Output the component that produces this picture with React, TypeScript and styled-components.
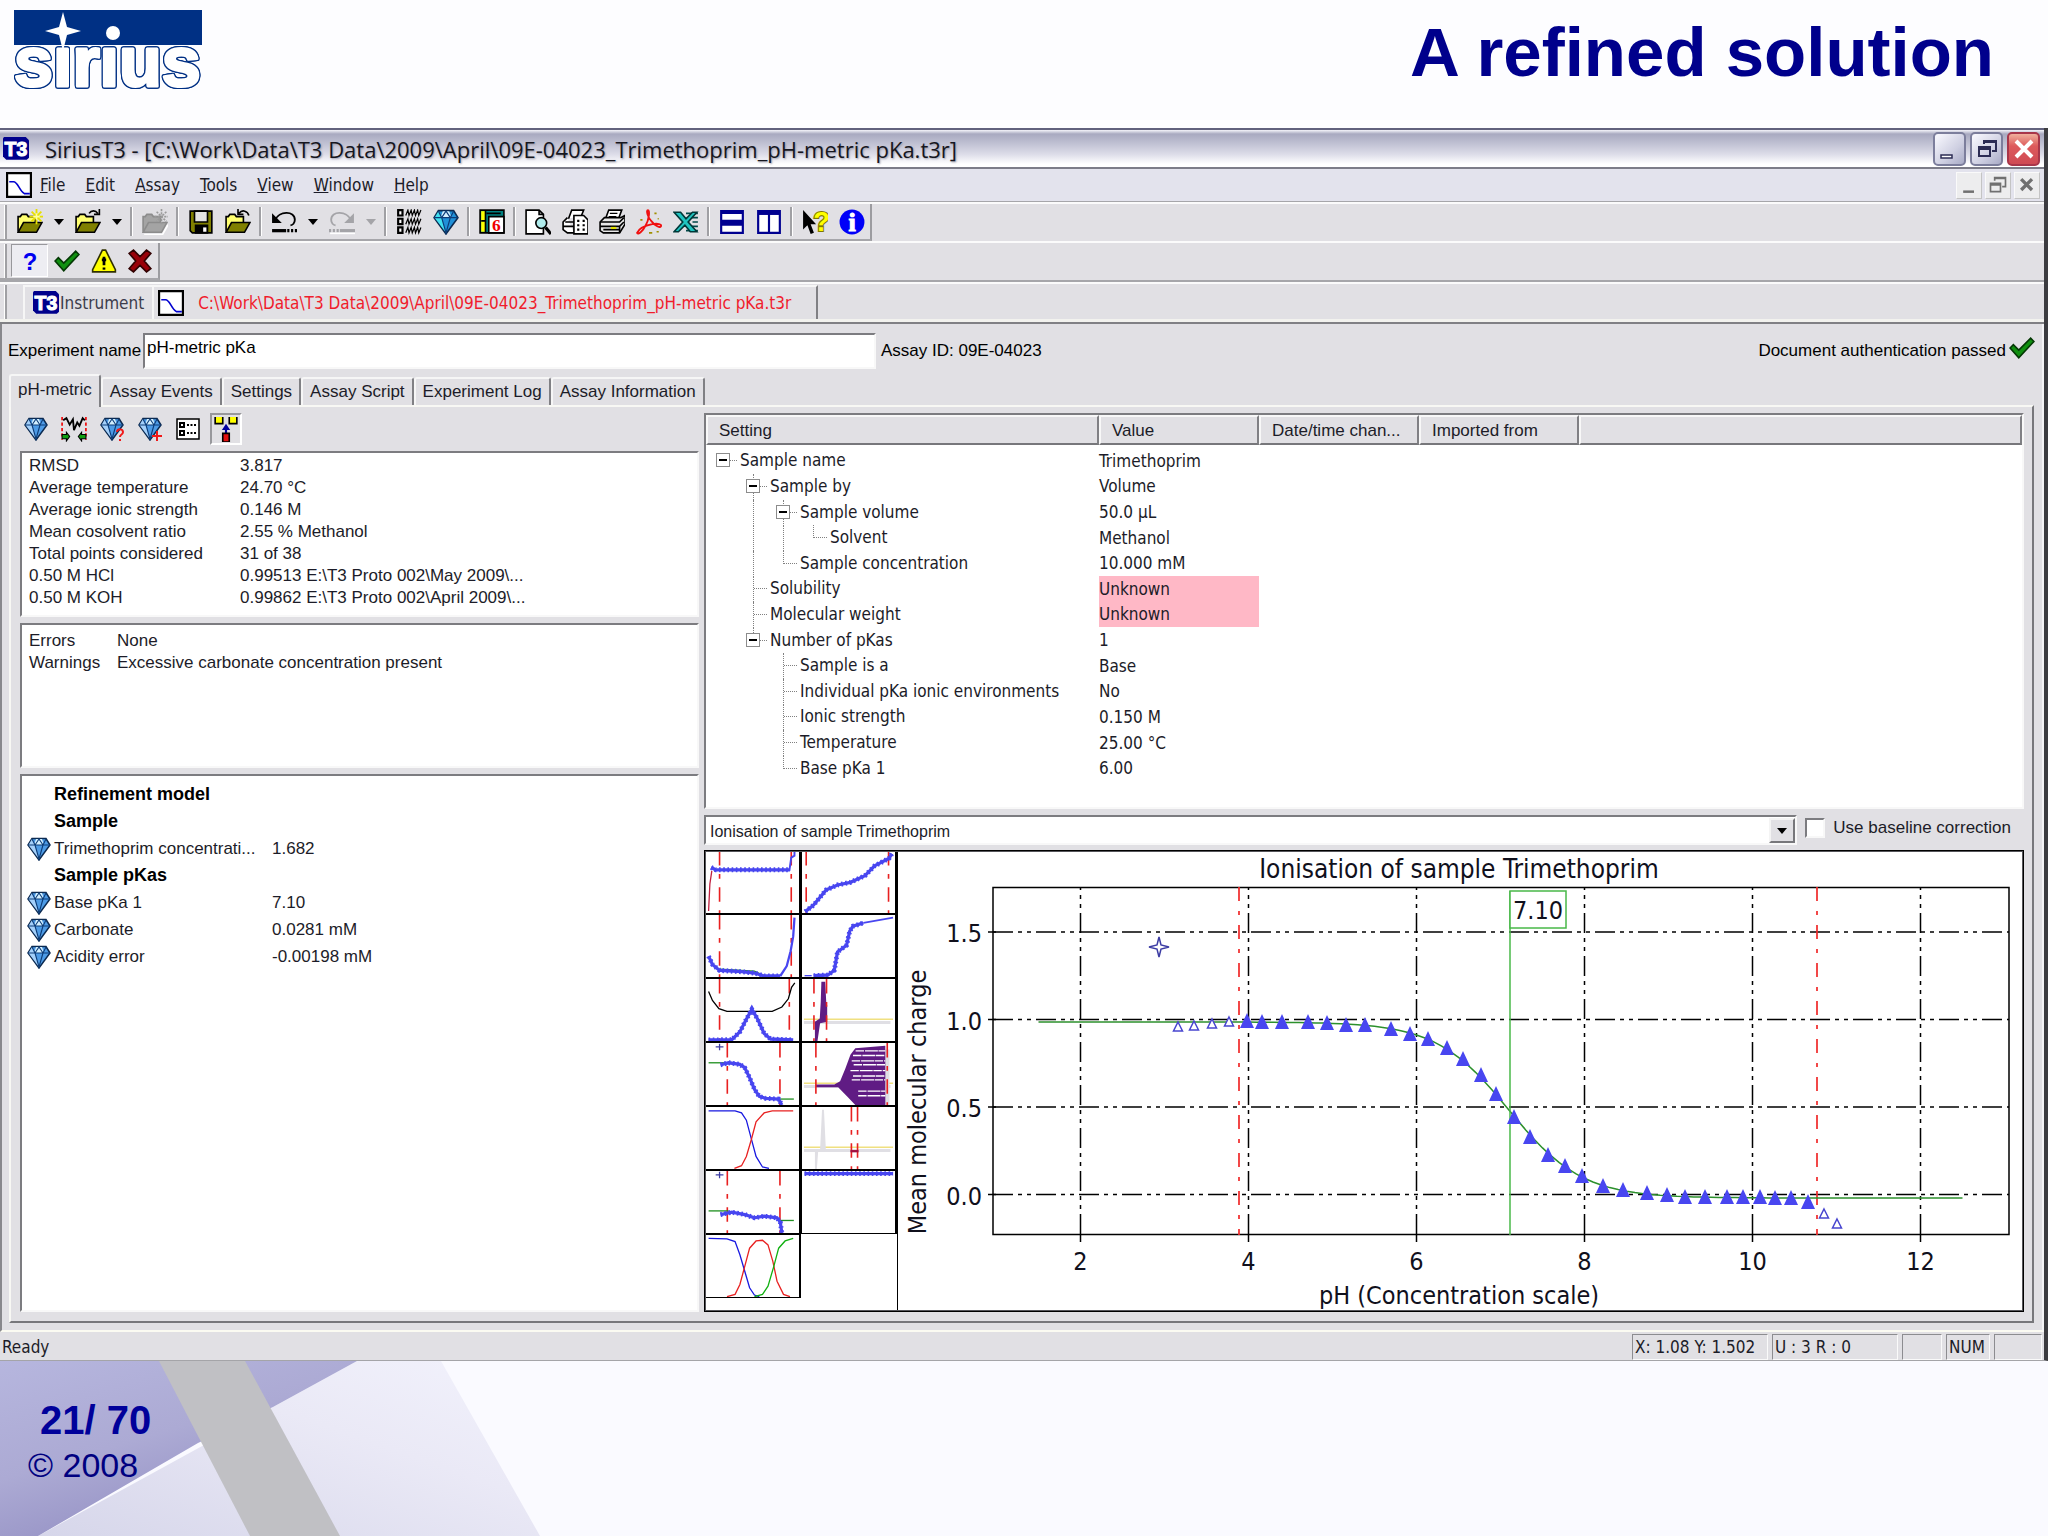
import React from "react";
import styled, { createGlobalStyle, css } from "styled-components";

const face = "#e1e0e4";
const navy = "#00008c";
const tahoma = `"DejaVu Sans Condensed", "DejaVu Sans", sans-serif`;
const sans = `"Liberation Sans", Arial, sans-serif`;

const GlobalStyle = createGlobalStyle`
  * { box-sizing: border-box; }
  body { margin: 0; background: #fdfdff; font-family: ${sans}; color: #1c1c28; }
  button, input, select { font: inherit; color: inherit; }
`;

/* ---------- Slide ---------- */

const Slide = styled.div`
  display: flex;
  flex-direction: column;
  min-height: 100vh;
`;

const SlideHeader = styled.header`
  display: flex;
  justify-content: space-between;
  align-items: flex-start;
  height: 128px;
  padding: 8px 54px 0 12px;
`;

const SlideTitle = styled.h1`
  margin: 6px 0 0;
  font-size: 69px;
  line-height: 78px;
  font-weight: bold;
  color: ${navy};
`;

const LogoText = styled.text`
  font-family: ${sans};
  font-size: 70px;
  font-weight: bold;
  fill: #fff;
  stroke: #fff;
  stroke-width: 3px;
  stroke-linejoin: round;
  filter: drop-shadow(1px 0 0 #003084) drop-shadow(-1px 0 0 #003084) drop-shadow(0 1px 0 #003084)
    drop-shadow(0 -1px 0 #003084);
`;

const SlideFooter = styled.footer`
  position: relative;
  flex: 1;
  min-height: 175px;
  padding: 36px 28px 0;
  background: #fafaff;
  overflow: hidden;
`;

const FooterArt = styled.svg`
  position: absolute;
  left: 0;
  top: 0;
  width: 600px;
  height: 175px;
`;

const PageNumber = styled.p`
  position: relative;
  margin: 0;
  padding-left: 12px;
  font-size: 40px;
  line-height: 46px;
  font-weight: bold;
  color: #00009a;
`;

const Copyright = styled.p`
  position: relative;
  margin: 0;
  font-size: 34px;
  line-height: 44px;
  color: #000080;
`;

/* ---------- Application window ---------- */

const AppWindow = styled.main`
  display: flex;
  flex-direction: column;
  background: ${face};
  border-right: 4px solid #3c3c40;
  border-bottom: 1px solid #a4a4a8;
`;

const TitleBar = styled.div`
  display: flex;
  align-items: center;
  height: 41px;
  padding: 0 4px 0 3px;
  border-top: 2px solid #62627e;
  border-bottom: 2px solid #7c7c88;
  background: linear-gradient(#f4f4fa 0, #a8a9c0 4px, #bcbdd0 12px, #dcdce8 24px, #ffffff 34px);
`;

const WindowTitle = styled.h2`
  flex: 1;
  margin: 0;
  padding-left: 16px;
  font-family: "Open Sans", "Noto Sans", sans-serif;
  font-size: 22px;
  line-height: 30px;
  font-weight: normal;
  color: #16161e;
  text-shadow: 1px 1px 2px #9a9aaa;
  white-space: nowrap;
`;

const WindowButtons = styled.div`
  display: flex;
  gap: 4px;
`;

const CaptionButton = styled.button<{ $danger?: boolean }>`
  width: 33px;
  height: 34px;
  padding: 0;
  border: 2px solid ${(p) => (p.$danger ? "#a8364a" : "#7c7e9c")};
  border-radius: 5px;
  background: ${(p) =>
    p.$danger
      ? "linear-gradient(#f0b09c, #dd5a5c 40%, #cf4a54)"
      : "linear-gradient(135deg, #fafaff, #cfd0e2 60%, #a9abc6)"};
  svg { display: block; margin: auto; }
`;

const MenuBar = styled.nav`
  display: flex;
  align-items: center;
  height: 33px;
  padding: 0 4px 0 6px;
  background: #e3e3ed;
  border-bottom: 1px solid #a6a6aa;
`;

const MenuItem = styled.button`
  padding: 0;
  margin-left: 8px;
  margin-right: 12px;
  border: 0;
  background: none;
  font-family: ${tahoma};
  font-size: 17px;
  line-height: 22px;
  &::first-letter { text-decoration: underline; }
`;

const ChildButtons = styled.div`
  display: flex;
  gap: 3px;
  margin-left: auto;
`;

const ChildButton = styled.button`
  width: 26px;
  height: 27px;
  padding: 0;
  border: 1px solid;
  border-color: #fafafa #c4c4c4 #c4c4c4 #fafafa;
  background: #ededee;
  svg { display: block; margin: auto; }
`;

const ToolRow = styled.div`
  display: flex;
  height: 39px;
  border-top: 2px solid #fbfbfb;
`;

const ToolBar = styled.div`
  display: flex;
  align-items: center;
  border-right: 2px solid #9c9ca0;
  border-bottom: 2px solid #a6a6aa;
`;

const Grip = styled.span`
  width: 3px;
  height: 34px;
  margin: 0 4px;
  border-right: 2px solid #a0a0a4;
  border-left: 1px solid #fff;
`;

const ToolButton = styled.button<{ $pressed?: boolean; $width?: number }>`
  display: grid;
  place-items: center;
  width: ${(p) => p.$width ?? 37}px;
  height: 33px;
  padding: 0;
  border: 1px solid transparent;
  background: none;
  ${(p) =>
    p.$pressed &&
    css`
      border-color: #98989c #fff #fff #98989c;
      background: #ededf2;
    `}
`;

const Separator = styled.span`
  width: 3px;
  height: 29px;
  margin: 0 3px;
  border-left: 2px solid #a0a0a4;
  border-right: 1px solid #fff;
`;

const DocumentBar = styled.div`
  display: flex;
  height: 44px;
  padding-top: 3px;
  border-top: 2px solid #a6a6aa;
  border-bottom: 2px solid #808084;
  box-shadow: inset 0 2px 0 #fbfbfb, inset 0 -3px 0 #f2f2ee;
`;

const DocumentTab = styled.button<{ $active?: boolean }>`
  display: flex;
  align-items: center;
  gap: ${(p) => (p.$active ? 14 : 1)}px;
  height: 34px;
  padding: 0 ${(p) => (p.$active ? 25 : 8)}px 0 ${(p) => (p.$active ? 4 : 8)}px;
  margin-left: ${(p) => (p.$active ? 0 : 12)}px;
  border: 0;
  border-top: 2px solid #f6f6f6;
  border-left: ${(p) => (p.$active ? 0 : 2)}px solid #f6f6f6;
  border-right: 2px solid ${(p) => (p.$active ? "#808084" : "#f6f6f6")};
  background: none;
  font-family: ${tahoma};
  font-size: 17px;
  line-height: 22px;
  color: ${(p) => (p.$active ? "#f01c2c" : "#3c3c4c")};
  white-space: nowrap;
`;

/* ---------- Experiment form ---------- */

const Workspace = styled.section`
  padding: 0 8px 7px 7px;
  border-left: 2px solid #88888c;
  border-bottom: 2px solid #fbfbf2;
  border-right: 2px solid #f4f4f6;
`;

const ExperimentRow = styled.div`
  display: flex;
  align-items: center;
  height: 50px;
  padding-top: 3px;
  font-size: 17px;
  line-height: 22px;
  color: #000;
`;

const NameLabel = styled.label`
  flex: none;
  width: 135px;
  margin-left: -1px;
  white-space: nowrap;
`;

const sunken = css`
  border: 2px solid;
  border-color: #7c7c80 #f8f8f8 #f8f8f8 #7c7c80;
  background: #fff;
`;

const NameInput = styled.input`
  ${sunken}
  width: 733px;
  height: 36px;
  padding: 0 2px 6px;
`;

const AssayId = styled.span`
  margin-left: 5px;
`;

const AuthStatus = styled.span`
  display: flex;
  align-items: center;
  gap: 3px;
  margin-left: auto;
  margin-right: -1px;
  svg { margin-bottom: 6px; }
`;

const PageTabs = styled.div`
  display: flex;
  align-items: flex-end;
  height: 31px;
`;

const PageTab = styled.button<{ $active?: boolean }>`
  height: ${(p) => (p.$active ? 33 : 28)}px;
  margin-bottom: ${(p) => (p.$active ? -2 : 0)}px;
  padding: 0 7px ${(p) => (p.$active ? 4 : 0)}px 7px;
  border: 2px solid;
  border-color: #f6f6f6 #808084 transparent #f6f6f6;
  border-bottom: 0;
  border-radius: 3px 3px 0 0;
  background: ${face};
  font-size: 17px;
  line-height: 22px;
  white-space: nowrap;
`;

const Page = styled.div`
  display: grid;
  grid-template-columns: 679px minmax(0, 1fr);
  gap: 5px;
  padding: 6px 8px 9px 9px;
  border: 2px solid;
  border-color: #f8f8f4 #77777b #77777b #f8f8f4;
`;

const Column = styled.div`
  display: flex;
  flex-direction: column;
  gap: 6px;
  min-width: 0;
`;

const PanelTools = styled.div`
  display: flex;
  align-items: center;
  gap: 6px;
  height: 32px;
`;

const PanelButton = styled.button<{ $pressed?: boolean }>`
  display: grid;
  place-items: center;
  width: 32px;
  height: 32px;
  padding: 0;
  border: 2px solid transparent;
  background: none;
  ${(p) =>
    p.$pressed &&
    css`
      border-color: #98989c #fff #fff #98989c;
    `}
`;

const Box = styled.section<{ $h?: number; $top?: number }>`
  ${sunken}
  ${(p) => (p.$h ? `height: ${p.$h}px;` : "flex: 1;")}
  padding: ${(p) => p.$top ?? 2}px 7px 0;
`;

const Pairs = styled.dl<{ $label: number }>`
  display: grid;
  grid-template-columns: ${(p) => p.$label}px 1fr;
  margin: 0;
  font-size: 17px;
  line-height: 22px;
  dt, dd { margin: 0; white-space: nowrap; }
`;

const ModelTable = styled.table`
  margin-top: 3px;
  margin-left: -2px;
  border-collapse: collapse;
  font-size: 17px;
  line-height: 22px;
  th, td { height: 27px; padding: 0; text-align: left; font-weight: normal; white-space: nowrap; }
  tr > :first-child { width: 27px; }
  tr > :nth-child(2) { width: 218px; }
  svg { display: block; }
`;

const ModelGroup = styled.strong`
  font-size: 18px;
  color: #000;
`;

/* ---------- Settings tree ---------- */

const TreeBox = styled.section`
  ${sunken}
  height: 396px;
`;

const TreeTable = styled.table`
  width: 100%;
  height: 366px;
  table-layout: fixed;
  border-collapse: collapse;
  font-family: ${tahoma};
  font-size: 17px;
  line-height: 22px;
  td, th { padding: 0; text-align: left; font-weight: normal; white-space: nowrap; }
`;

const HeadCell = styled.div`
  height: 30px;
  margin-bottom: 3px;
  padding: 3px 11px;
  overflow: hidden;
  border: 2px solid;
  border-color: #f8f8f8 #808084 #77777b #f8f8f8;
  background: ${face};
  font-family: ${sans};
`;

const TreeCell = styled.div`
  display: flex;
  align-items: stretch;
  height: 25px;
  padding-left: 4px;
  line-height: 24px;
`;

const Guide = styled.span<{ $line?: "full" | "half" | "none"; $arm?: boolean }>`
  position: relative;
  flex: none;
  width: 30px;
  &::before {
    content: "";
    position: absolute;
    left: 13px;
    top: 0;
    height: ${(p) => (p.$line === "full" ? "26px" : p.$line === "half" ? "13px" : "0")};
    border-left: 1px dotted #808080;
  }
  &::after {
    content: "";
    position: absolute;
    left: 14px;
    top: 12px;
    width: ${(p) => (p.$arm ? "13px" : "0")};
    border-top: 1px dotted #808080;
  }
`;

const Expander = styled.button`
  position: absolute;
  z-index: 1;
  left: 6px;
  top: 5px;
  width: 14px;
  height: 14px;
  padding: 0;
  border: 1px solid #8c8c8c;
  background: linear-gradient(#000, #000) center / 8px 2px no-repeat #fff;
`;

const ValueCell = styled.td<{ $missing?: boolean }>`
  ${(p) => p.$missing && "background: #ffb8c6;"}
`;

/* ---------- Graph ---------- */

const GraphBar = styled.div`
  display: flex;
  align-items: center;
  height: 30px;
  margin-bottom: -1px;
  font-size: 17px;
  line-height: 22px;
`;

const ComboBox = styled.div`
  ${sunken}
  position: relative;
  flex: 1;
  height: 30px;
`;

const Combo = styled.select`
  appearance: none;
  display: block;
  width: 100%;
  height: 26px;
  padding: 3px 30px 0 4px;
  border: 0;
  background: #fff;
  font-size: 16px;
`;

const ComboArrow = styled.span`
  position: absolute;
  right: 0;
  top: 1px;
  width: 26px;
  height: 25px;
  display: grid;
  place-items: center;
  border: 2px solid;
  border-color: #f4f4f4 #77777b #77777b #f4f4f4;
  background: ${face};
  pointer-events: none;
`;

const CheckLabel = styled.label`
  display: flex;
  align-items: center;
  gap: 8px;
  margin: 0 13px 5px 8px;
  white-space: nowrap;
`;

const CheckBox = styled.input`
  ${sunken}
  appearance: none;
  width: 20px;
  height: 20px;
  margin: 0;
`;

const GraphFrame = styled.section`
  display: grid;
  grid-template-columns: 193px minmax(0, 1fr);
  border: 1px solid #000;
  outline: 1px solid #55555a;
  outline-offset: -2px;
  background: #fff;
`;

const Thumbs = styled.div`
  display: grid;
  grid-template-columns: 96px 96px;
  grid-auto-rows: 64px;
  margin-top: -1px;
  border-right: 1px solid #000;
`;

const ThumbButton = styled.button`
  padding: 0;
  border: solid #000;
  border-width: 1px 2px 1px 1px;
  background: #fff;
  svg { display: block; width: 100%; height: 100%; }
`;

const ChartSvg = styled.svg`
  display: block;
  width: 100%;
  height: auto;
  font-family: ${tahoma};
  font-size: 25px;
`;

/* ---------- Status bar ---------- */

const StatusBar = styled.footer`
  display: flex;
  align-items: center;
  gap: 4px;
  height: 28px;
  padding: 1px 2px 0;
  font-family: ${tahoma};
  font-size: 17px;
  line-height: 24px;
`;

const StatusText = styled.span`
  flex: 1;
`;

const Pane = styled.span<{ $w: number }>`
  width: ${(p) => p.$w}px;
  height: 26px;
  padding-left: 2px;
  border: 1px solid;
  border-color: #8c8c90 #fafafa #fafafa #8c8c90;
  white-space: nowrap;
`;

/* ---------- Icons ---------- */

const Svg = ({ children, size = 26 }: { children: React.ReactNode; size?: number }) => (
  <svg width={size} height={size} viewBox="0 0 24 24" fill="none" stroke="#000" strokeWidth="1.5" aria-hidden="true">
    {children}
  </svg>
);

const Glyph = styled.text<{ $serif?: boolean }>`
  font-family: ${(p) => (p.$serif ? `"Liberation Serif", serif` : sans)};
  font-weight: bold;
  text-anchor: middle;
  paint-order: stroke;
`;

const Diamond = ({ size = 26, light, children }: { size?: number; light?: boolean; children?: React.ReactNode }) => (
  <Svg size={size}>
    <path d="M5 1.500h14l4 6.500-11 15L1 8z" fill={light ? "#4d9be6" : "#2090d8"} stroke="#0c2a50" />
    <path d="M5 2l3 6 4 14L1.500 8z" fill={light ? "#a4d0fa" : "#40e0f0"} stroke="none" />
    <path d="M9 2h6l2 6H7z" fill="#d4f0ff" stroke="none" />
    <path d="M1 8h22M8 8l4 14 4-14M5 2l3 6 4-6 4 6 3-6" stroke="#0c3c78" strokeWidth="1.100" />
    {children}
  </Svg>
);

const Folder = ({ gray }: { gray?: boolean }) => (
  <>
    <path d="M1 21V7h2l1.500-2H9l1.500 2H17v5" fill={gray ? "#a4a4a4" : "#ffff70"} stroke={gray ? "#8c8c8c" : "#000"} />
    <path d="M1 21.500l5-9h17l-5 9z" fill={gray ? "#a4a4a4" : "#808000"} stroke={gray ? "#8c8c8c" : "#000"} />
  </>
);

const icons: Record<string, React.ReactNode> = {
  new: (
    <Svg>
      <Folder />
      <path d="M18 0v14M11.500 7h13M13.500 2.500l9 9M22.500 2.500l-9 9" stroke="#e8e000" strokeWidth="1.700" />
      <path d="M18 4v6M15 7h6" stroke="#ffffa0" />
    </Svg>
  ),
  open: (
    <Svg>
      <Folder />
      <path d="M13 4c2-3 6-3 8 0M22.500 0v5h-5" />
    </Svg>
  ),
  newOff: (
    <Svg>
      <Folder gray />
      <path d="M18 0v14M11.500 7h13M13.500 2.500l9 9M22.500 2.500l-9 9" stroke="#9a9a9a" strokeDasharray="2 1" />
      <path d="M2 23.500h17l5-9" stroke="#fff" />
    </Svg>
  ),
  save: (
    <Svg>
      <path d="M2 2h20v20H4l-2-2z" fill="#808000" />
      <path d="M6 2h12v10H6z" fill="#e4e4e4" />
      <path d="M7 15h11v7H7z" fill="#000" />
      <path d="M14 17h3v4h-3z" fill="#fff" stroke="none" />
    </Svg>
  ),
  revert: (
    <Svg>
      <Folder />
      <path d="M22 6c-1-4-6-6-9-2M12 0v5h5" />
    </Svg>
  ),
  undo: (
    <Svg>
      <path d="M4 10c3-8 18-9 18 0 0 3-2 5-4 5" strokeWidth="1.700" />
      <path d="M1 4v9h9z" fill="#000" stroke="none" />
      <path d="M1 20h13" strokeWidth="3" />
      <path d="M15 20h9" strokeWidth="3" strokeDasharray="2 1.500" />
    </Svg>
  ),
  redo: (
    <Svg>
      <g stroke="#a4a4a8">
        <path d="M20 10C17 2 2 1 2 10c0 3 2 5 4 5" strokeWidth="1.700" />
        <path d="M23 4v9h-9z" fill="#a4a4a8" stroke="none" />
        <path d="M10 20h14" strokeWidth="3" />
        <path d="M0 20h10" strokeWidth="3" strokeDasharray="2 1.500" />
      </g>
      <path d="M1 22.500h23" stroke="#fff" />
    </Svg>
  ),
  list: (
    <Svg>
      {[1, 9, 17].map((y) => (
        <g key={y}>
          <path d={`M2 ${y}h4v5H2z`} fill="#fff" strokeWidth="2" />
          <path d={`M9 ${y + 5}l2-5 1 5 2-5 1 5 2-5 1 5 2-5 1 5 2-5`} strokeWidth="1.100" />
        </g>
      ))}
    </Svg>
  ),
  diamond: <Diamond />,
  calendar: (
    <Svg>
      <path d="M1 1h22v21H1z" fill="#008080" />
      <path d="M2 2h4v19H2z" fill="#ffff00" stroke="none" />
      <path d="M6 1v21M2 11h4M7 4h13" />
      <path d="M9 7h14v15H9z" fill="#fff" />
      <Glyph x="16" y="20" fontSize="16" fill="#f00000" stroke="none" $serif>6</Glyph>
    </Svg>
  ),
  preview: (
    <Svg>
      <path d="M1 1h12l4 4v18H1z" fill="#fff" />
      <path d="M13 1v4h4" />
      <circle cx="15" cy="13" r="5" fill="#b0ecec" />
      <path d="M19 17l5 6" strokeWidth="3" />
    </Svg>
  ),
  report: (
    <Svg>
      <path d="M6 9l3-8h11l-2 5M5 8l-4 4v7l4 3h6M3 12h8M1 16h10" fill="#fff" />
      <path d="M11 6h9l4 4v13H11z" fill="#fff" />
      <path d="M14 11h2M19 11h2M14 15h2M19 15h2M14 19h2M19 19h2" strokeWidth="2" />
    </Svg>
  ),
  print: (
    <Svg>
      <path d="M6 9L9 1h12l-3 8" fill="#fff" />
      <path d="M10 4h7M9 7h7" strokeWidth="1" />
      <path d="M1 12l4-4h15l4-2v8l-5 8H4l-3-2z" fill="#e8e8e8" />
      <path d="M1 12h18l4-4M1 16h18v6M19 16l4-4M4 19h15" />
      <path d="M11 17.500h5" stroke="#e0e000" strokeWidth="2" />
    </Svg>
  ),
  pdf: (
    <Svg>
      <path d="M1 22c2-5 9-7 14-8 5-1 9 0 8 2s-6-1-9-5C11 8 9 1 11 1s1 9-2 14c-3 6-7 9-8 7z" stroke="#f01010" strokeWidth="1.700" />
      <path d="M17 4h2M20 9h1M4 10h2M12 22h3M19 21h2" stroke="#a09000" />
    </Svg>
  ),
  excel: (
    <Svg>
      <path d="M12 4h11M12 20h11M17 8h6M18 12h5M17 16h6" stroke="#004848" />
      <path d="M1 3h6l5 6 6-6h4L14 12l8 9h-6l-5-6-6 6H1l8-9z" fill="#20c4c0" stroke="#003838" />
    </Svg>
  ),
  rows: (
    <Svg>
      <path d="M2 2h20v9H2zM2 13h20v9H2z" fill="#fff" stroke="#000090" strokeWidth="2" />
      <path d="M2 3h20M2 14h20" stroke="#000090" strokeWidth="3" />
    </Svg>
  ),
  cols: (
    <Svg>
      <path d="M2 2h20v20H2zM12 2v20" fill="#fff" stroke="#000090" strokeWidth="2" />
      <path d="M2 3.500h20" stroke="#000090" strokeWidth="4" />
    </Svg>
  ),
  help: (
    <Svg>
      <path d="M1 1v18l4-4 3 8 3-1-3-8h5z" fill="#000" stroke="none" />
      <Glyph x="18" y="20" fontSize="25" fill="#ffff00" stroke="#807800" strokeWidth="2">?</Glyph>
    </Svg>
  ),
  info: (
    <Svg>
      <circle cx="12" cy="12" r="11.500" fill="#0000f8" stroke="none" />
      <Glyph x="12" y="20" fontSize="24" fill="#fff" stroke="#fff" strokeWidth="1" $serif>i</Glyph>
    </Svg>
  ),
  question: (
    <Svg>
      <Glyph x="12" y="20" fontSize="22" fill="#0000f0" stroke="none">?</Glyph>
    </Svg>
  ),
  check: (
    <Svg>
      <path d="M1 12l3-3 5 5L20 3l3 3L9 21z" fill="#109010" stroke="#043804" />
    </Svg>
  ),
  warning: (
    <Svg>
      <path d="M10.500 2h3l9 18v2h-21v-2z" fill="#ffff00" stroke="#303000" />
      <path d="M12 8v8M10 11h4" strokeWidth="2.500" />
      <path d="M12 18v2" strokeWidth="2.500" />
    </Svg>
  ),
  cross: (
    <Svg>
      <path d="M2 5l4-3 6 6 6-6 4 3-6 7 6 7-4 3-6-6-6 6-4-3 6-7z" fill="#980008" stroke="#300000" />
    </Svg>
  ),
  graph: (
    <Svg>
      <path d="M1 1v21M23 1v21" stroke="#f00000" strokeDasharray="3 2" />
      <path d="M2 4l3-2 3 6 3-5 1 10 3-7 2 3 3-7 2 2" strokeWidth="1.700" />
      <path d="M1 17h4v-2l3 4-3 4v-2H1zM23 17h-4v-2l-3 4 3 4v-2h4z" fill="#10a010" strokeWidth="1" />
    </Svg>
  ),
  diamondAsk: (
    <Diamond light size={24}>
      <path d="M17 15c0-4 6-3 6 0s-3 2-3 5M20 22v2" stroke="#f01818" strokeWidth="2" />
    </Diamond>
  ),
  diamondPlus: (
    <Diamond light size={24}>
      <path d="M19 14v10M14 19h10" stroke="#f01818" strokeWidth="2" />
    </Diamond>
  ),
  options: (
    <Svg size={24}>
      <path d="M1 2h22v20H1z" fill="#fff" />
      <path d="M4 6h4v4H4zM4 14h4v4H4z" fill="#fff" strokeWidth="2" />
      <path d="M11 8h9M11 16h9" strokeWidth="2" strokeDasharray="2 1.500" />
    </Svg>
  ),
  merge: (
    <Svg>
      <path d="M2 1v6h7V1M15 1v6h7V1" fill="#ffff00" />
      <path d="M12 16v-6M10 12l2-3 2 3z" stroke="#0000a0" fill="#0000a0" strokeWidth="2" />
      <path d="M9 16h6v8H9z" fill="#e01010" />
    </Svg>
  ),
  t3: (
    <Svg>
      <path d="M1 1h20l3 3v16l-2 2H3l-3-3V2z" fill="#00008c" stroke="none" />
      <Glyph x="12" y="18" fontSize="18" fill="#fff" stroke="#fff" strokeWidth="1">T3</Glyph>
    </Svg>
  ),
  doc: (
    <Svg>
      <path d="M1 1h22v22H1z" fill="#fff" strokeWidth="2" />
      <path d="M3 9h4c4 0 5 8 10 11h5" stroke="#0000d0" />
    </Svg>
  ),
};

const DropArrow = ({ color = "#000" }: { color?: string }) => (
  <svg width="10" height="6" viewBox="0 0 10 6" aria-hidden="true">
    <path d="M0 0h10L5 6z" fill={color} />
  </svg>
);

/* ---------- Data ---------- */

type Tool = [kind: "icon" | "drop" | "sep", name?: string, label?: string];

const tools: Tool[] = [
  ["icon", "new", "New assay"], ["drop", "#000", "New options"],
  ["icon", "open", "Open"], ["drop", "#000", "Open options"], ["sep"],
  ["icon", "newOff", "New from template"], ["sep"],
  ["icon", "save", "Save"], ["icon", "revert", "Revert"], ["sep"],
  ["icon", "undo", "Undo"], ["drop", "#000", "Undo history"],
  ["icon", "redo", "Redo"], ["drop", "#a4a4a8", "Redo history"], ["sep"],
  ["icon", "list", "List"], ["icon", "diamond", "Refine"], ["sep"],
  ["icon", "calendar", "Calendar"], ["sep"],
  ["icon", "preview", "Print preview"], ["icon", "report", "Report"], ["icon", "print", "Print"],
  ["icon", "pdf", "Export PDF"], ["icon", "excel", "Export Excel"], ["sep"],
  ["icon", "rows", "Split rows"], ["icon", "cols", "Split columns"], ["sep"],
  ["icon", "help", "Context help"], ["icon", "info", "About"],
];

const results = [
  ["RMSD", "3.817"],
  ["Average temperature", "24.70 °C"],
  ["Average ionic strength", "0.146 M"],
  ["Mean cosolvent ratio", "2.55 % Methanol"],
  ["Total points considered", "31 of 38"],
  ["0.50 M HCl", "0.99513 E:\\T3 Proto 002\\May 2009\\..."],
  ["0.50 M KOH", "0.99862 E:\\T3 Proto 002\\April 2009\\..."],
];

const model: [string, string?][] = [
  ["Refinement model"],
  ["Sample"],
  ["Trimethoprim concentrati...", "1.682"],
  ["Sample pKas"],
  ["Base pKa 1", "7.10"],
  ["Carbonate", "0.0281 mM"],
  ["Acidity error", "-0.00198 mM"],
];

/* Each guide letter: n = blank, f = through line, t = tee, e = elbow, x = root expander,
   X = expander on a through line, Y = expander that ends its line */
const tree: { guides: string; name: string; value: string; missing?: boolean }[] = [
  { guides: "x", name: "Sample name", value: "Trimethoprim" },
  { guides: "nX", name: "Sample by", value: "Volume" },
  { guides: "nfX", name: "Sample volume", value: "50.0 µL" },
  { guides: "nffe", name: "Solvent", value: "Methanol" },
  { guides: "nfe", name: "Sample concentration", value: "10.000 mM" },
  { guides: "nt", name: "Solubility", value: "Unknown", missing: true },
  { guides: "nt", name: "Molecular weight", value: "Unknown", missing: true },
  { guides: "nY", name: "Number of pKas", value: "1" },
  { guides: "nnt", name: "Sample is a", value: "Base" },
  { guides: "nnt", name: "Individual pKa ionic environments", value: "No" },
  { guides: "nnt", name: "Ionic strength", value: "0.150 M" },
  { guides: "nnt", name: "Temperature", value: "25.00 °C" },
  { guides: "nne", name: "Base pKa 1", value: "6.00" },
];

/* ---------- Chart ---------- */

const px = (ph: number) => 14.5 + 84 * ph;
const py = (c: number) => 343.5 - 175 * c;

const curve = Array.from({ length: 111 }, (_, i) => {
  const ph = 1.5 + i * 0.1;
  return `${px(ph).toFixed(1)},${(347 - 176 / (1 + Math.pow(10, ph - 7.1))).toFixed(1)}`;
}).join(" ");

const used: [number, number][] = [
  [349, 170], [364, 171], [384, 171], [410, 171], [429, 172], [448, 174], [467, 174], [493, 178], [512, 183],
  [530, 188], [549, 197], [565, 208], [583, 224], [598, 243], [616, 266], [632, 286], [650, 304], [667, 315],
  [684, 325], [705, 335], [725, 339], [749, 342], [769, 344], [787, 346], [807, 346], [829, 346], [845, 346],
  [862, 346], [877, 347], [893, 347], [910, 351],
];
const rejected: [number, number][] = [[280, 176], [296, 175], [314, 173], [331, 171], [926, 363], [939, 373]];

const Chart = () => (
  <ChartSvg viewBox="0 0 1125 460" role="img" aria-label="Ionisation of sample Trimethoprim">
    <g textAnchor="middle" fill="#10101c">
      <text x="561" y="27" fontSize="26">Ionisation of sample Trimethoprim</text>
      <text x="561" y="453">pH (Concentration scale)</text>
      <text transform="translate(28 251) rotate(-90)">Mean molecular charge</text>
      {[2, 4, 6, 8, 10, 12].map((v) => (
        <text key={v} x={px(v)} y="419">{v}</text>
      ))}
    </g>
    <g textAnchor="end" fill="#10101c">
      {[0, 0.5, 1, 1.5].map((v) => (
        <text key={v} x="84" y={py(v) + 10}>{v.toFixed(1)}</text>
      ))}
    </g>
    <g stroke="#000" strokeWidth="1.500" strokeDasharray="20 5 4 5 4 5" fill="none">
      {[2, 4, 6, 8, 10, 12].map((v) => (
        <path key={v} d={`M${px(v)} 383V37`} />
      ))}
      {[0, 0.5, 1, 1.5].map((v) => (
        <path key={v} d={`M95 ${py(v)}H1111`} />
      ))}
    </g>
    <g stroke="#000" strokeWidth="1.500" fill="none">
      <path d="M95 36.500H1111V383.500H95z" />
      {[2, 4, 6, 8, 10, 12].map((v) => (
        <path key={v} d={`M${px(v)} 383v8`} />
      ))}
      {[0, 0.5, 1, 1.5].map((v) => (
        <path key={v} d={`M90 ${py(v)}h8`} />
      ))}
    </g>
    <path d="M341 36V384M919 36V384" stroke="#f02828" strokeWidth="1.700" strokeDasharray="14 10 4 10" />
    <polyline points={curve} fill="none" stroke="#2c902c" strokeWidth="1.500" />
    <path d="M612 40V384" stroke="#48b848" strokeWidth="1.500" />
    <rect x="612" y="40" width="56" height="37" fill="#fff" stroke="#48b848" strokeWidth="1.500" />
    <text x="640" y="68" textAnchor="middle" fill="#10101c">7.10</text>
    {used.map(([x, y]) => (
      <path key={x} d={`M${x} ${y - 8}l7 15h-14z`} fill="#4846f0" />
    ))}
    {rejected.map(([x, y]) => (
      <path key={x} d={`M${x} ${y - 5}l4.500 9h-9z`} fill="#fff" stroke="#4846d0" strokeWidth="1.500" />
    ))}
    <path d="M261 86l2 8 8 2-8 2-2 8-2-8-8-2 8-2z" fill="#fff" stroke="#3c3ca4" strokeWidth="1.500" />
  </ChartSvg>
);

/* ---------- Thumbnails ---------- */

const blue = "#4846f0";
const Reds = ({ at }: { at: number[] }) => (
  <>
    {at.map((x) => (
      <path key={x} d={`M${x} 0V188`} stroke="#e82020" strokeWidth="5" strokeDasharray="44 26 14 26" />
    ))}
  </>
);
const Line = ({ d, c = blue, w = 4 }: { d: string; c?: string; w?: number }) => (
  <polyline points={d} fill="none" stroke={c} strokeWidth={w} />
);
/* Measured series: a thick line with marker bumps along it */
const Series = ({ d }: { d: string }) => (
  <>
    <Line d={d} w={10} />
    <polyline points={d} fill="none" stroke={blue} strokeWidth="15" strokeDasharray="5 8" />
  </>
);
const Plus = () => <path d="M42 2v20M30 12h24" stroke="#3c3ca4" strokeWidth="4" />;
const Baseline = () => (
  <>
    <Line d="6,122 282,122" c="#f0e080" />
    <Line d="6,132 274,132" c="#e0dfe4" w={9} />
  </>
);

const thumbs: { name: string; art: React.ReactNode }[] = [
  { name: "Temperature", art: <><Reds at={[42, 264]} /><Line d="8,182 12,100 18,60" c="#c02040" /><Series d="16,50 30,57 260,57" /><Line d="258,60 264,20 274,14 274,0" w={6} /></> },
  { name: "pH against volume", art: <><Reds at={[13, 268]} /><Series d="10,184 35,165 75,118 110,103 150,95 195,75 225,45 270,22 278,8" /></> },
  { name: "Buffer capacity", art: <><Reds at={[42, 264]} /><Line d="42,164 150,170 180,184" c="#209020" /><Series d="8,125 20,150 42,168 110,172 150,176 180,185 230,185" /><Line d="230,185 250,155 262,110 270,65 274,8" w={7} /></> },
  { name: "pH against time", art: <><Line d="8,184 30,184" /><Series d="36,184 80,182 100,168 110,112 138,92 148,48 158,34 190,24" /><Line d="190,24 282,8" w={5} /></> },
  { name: "Residuals", art: <><Reds at={[42, 258]} /><Line d="8,38 20,65 40,90 65,98 205,98 235,85 255,60 265,25 275,12" c="#000" /><Series d="8,185 80,184 105,160 125,122 142,92 160,122 180,165 200,182 270,185" /></> },
  { name: "Absorbance window", art: <><Baseline /><path d="M40 188V130L55 120 58 70 60 8H72L75 70 78 80V130L56 134 48 188z" fill="#601c84" /><Reds at={[37, 76]} /></> },
  { name: "Mean charge", art: <><Reds at={[66, 229]} /><Plus /><Line d="8,60 60,60" c="#209020" /><Line d="225,170 272,170" c="#209020" /><Series d="45,66 70,60 105,65 120,75 135,105 150,140 165,162 185,168 225,170 235,188" /></> },
  {
    name: "Absorbance fan",
    art: (
      <>
        <Baseline />
        <path d="M264 20V188" stroke="#e0dfe4" strokeWidth="14" />
        <path d="M43 126H100L118 116 134 78 150 36 165 16 258 8V188H165L140 162 112 134H43z" fill="#601c84" />
        <path d="M166 24H258M158 38H258M154 54H258M160 66H258M150 84H258M158 100H258M154 112H258M174 146H258M174 160H258" stroke="#fff" strokeWidth="4" strokeDasharray="26 3 40 2" />
        <Reds at={[43, 264]} />
      </>
    ),
  },
  { name: "Species distribution", art: <><Line d="8,12 90,12 110,18 125,40 140,95 155,150 175,182 195,186" c="#1818e0" /><Line d="88,186 110,178 125,150 140,100 155,45 180,18 205,12 270,12" c="#e82020" /></> },
  { name: "Selected wavelength", art: <><Baseline /><path d="M40 188V134L56 130 62 8H68L74 132 50 136 46 188z" fill="#e0dfe4" /><Reds at={[153, 172]} /><Line d="150,134 175,134" c="#a01040" w={7} /></> },
  { name: "Charge residuals", art: <><Reds at={[66, 229]} /><Plus /><Line d="8,121 70,121" c="#209020" /><Line d="228,150 272,150" c="#209020" /><Series d="45,132 80,125 120,132 150,142 180,137 220,142 230,155 235,188" /></> },
  { name: "Flow", art: <Series d="8,8 282,8" /> },
  { name: "Carbonate species", art: <><Line d="8,10 65,12 90,20 105,60 120,110 135,160 150,182 165,187" c="#1818e0" /><Line d="65,187 90,180 105,150 120,95 135,40 155,18 175,16 192,30 207,80 220,140 240,180 260,187" c="#e82020" /><Line d="150,187 175,180 192,155 210,95 225,40 245,18 270,10" c="#10b010" /></> },
];

/* ---------- Parts ---------- */

const Logo = () => (
  <svg width="200" height="110" viewBox="0 0 200 110" role="img" aria-label="Sirius">
    <LogoText x="2" y="78">sirius</LogoText>
    <path d="M2 2h188v35H2z" fill="#003084" />
    <path d="M51 4l4 15 14 4-14 4-4 16-4-16-14-4 14-4z" fill="#fff" />
    <circle cx="101" cy="25" r="7" fill="#fff" />
  </svg>
);

const TreeGuides = ({ guides }: { guides: string }) => (
  <>
    {guides.split("").map((g, i) => {
      const box = "xXY".includes(g);
      const line = "ftX".includes(g) ? "full" : "eY".includes(g) ? "half" : "none";
      return (
        <Guide key={i} $line={line} $arm={box || g === "t" || g === "e"}>
          {box && <Expander aria-label="Collapse" />}
        </Guide>
      );
    })}
  </>
);

export default function App() {
  return (
    <Slide>
      <GlobalStyle />
      <SlideHeader>
        <Logo />
        <SlideTitle>A refined solution</SlideTitle>
      </SlideHeader>

      <AppWindow>
        <TitleBar>
          {icons.t3}
          <WindowTitle>SiriusT3 - [C:\Work\Data\T3 Data\2009\April\09E-04023_Trimethoprim_pH-metric pKa.t3r]</WindowTitle>
          <WindowButtons>
            <CaptionButton aria-label="Minimise">
              <Svg size={24}><path d="M3 18h11v3H3z" fill="#fff" stroke="#2c2c54" /></Svg>
            </CaptionButton>
            <CaptionButton aria-label="Restore">
              <Svg size={24}><path d="M9 7V4h12v10h-4M9 5h12M4 10h11v9H4zM4 12h11" stroke="#2c2c54" strokeWidth="2" /></Svg>
            </CaptionButton>
            <CaptionButton $danger aria-label="Close">
              <Svg size={24}><path d="M4 4l16 16M20 4L4 20" stroke="#fff" strokeWidth="4" /></Svg>
            </CaptionButton>
          </WindowButtons>
        </TitleBar>

        <MenuBar>
          {icons.doc}
          {["File", "Edit", "Assay", "Tools", "View", "Window", "Help"].map((m) => (
            <MenuItem key={m}>{m}</MenuItem>
          ))}
          <ChildButtons>
            <ChildButton aria-label="Minimise document">
              <Svg size={20}><path d="M5 20h13" stroke="#707070" strokeWidth="3" /></Svg>
            </ChildButton>
            <ChildButton aria-label="Restore document">
              <Svg size={20}><path d="M8 7V3h13v11h-4M8 4h13M3 10h12v10H3zM3 12h12" stroke="#707070" strokeWidth="2" /></Svg>
            </ChildButton>
            <ChildButton aria-label="Close document">
              <Svg size={20}><path d="M5 5l13 13M18 5L5 18" stroke="#707070" strokeWidth="4" /></Svg>
            </ChildButton>
          </ChildButtons>
        </MenuBar>

        <ToolRow>
          <ToolBar>
            <Grip />
            {tools.map(([kind, name, label], i) =>
              kind === "sep" ? (
                <Separator key={i} />
              ) : (
                <ToolButton key={i} $width={kind === "drop" ? 21 : 37} aria-label={label}>
                  {kind === "drop" ? <DropArrow color={name} /> : icons[name!]}
                </ToolButton>
              )
            )}
          </ToolBar>
        </ToolRow>
        <ToolRow>
          <ToolBar>
            <Grip />
            <ToolButton $pressed aria-label="Query">{icons.question}</ToolButton>
            <ToolButton aria-label="Accept">{icons.check}</ToolButton>
            <ToolButton aria-label="Warn">{icons.warning}</ToolButton>
            <ToolButton $width={36} aria-label="Reject">{icons.cross}</ToolButton>
          </ToolBar>
        </ToolRow>

        <DocumentBar>
          <Grip />
          <DocumentTab>{icons.t3}Instrument</DocumentTab>
          <DocumentTab $active>
            {icons.doc}C:\Work\Data\T3 Data\2009\April\09E-04023_Trimethoprim_pH-metric pKa.t3r
          </DocumentTab>
        </DocumentBar>

        <Workspace>
          <ExperimentRow>
            <NameLabel htmlFor="experiment">Experiment name</NameLabel>
            <NameInput id="experiment" defaultValue="pH-metric pKa" />
            <AssayId>Assay ID: 09E-04023</AssayId>
            <AuthStatus>Document authentication passed{icons.check}</AuthStatus>
          </ExperimentRow>

          <PageTabs role="tablist">
            {["pH-metric", "Assay Events", "Settings", "Assay Script", "Experiment Log", "Assay Information"].map((t, i) => (
              <PageTab key={t} role="tab" aria-selected={i === 0} $active={i === 0}>{t}</PageTab>
            ))}
          </PageTabs>

          <Page>
            <Column>
              <PanelTools>
                <PanelButton aria-label="Refine"><Diamond light size={24} /></PanelButton>
                <PanelButton aria-label="Select range">{icons.graph}</PanelButton>
                <PanelButton aria-label="Query model">{icons.diamondAsk}</PanelButton>
                <PanelButton aria-label="Add to model">{icons.diamondPlus}</PanelButton>
                <PanelButton aria-label="Options">{icons.options}</PanelButton>
                <PanelButton $pressed aria-label="Combine">{icons.merge}</PanelButton>
              </PanelTools>
              <Box $h={166}>
                <Pairs $label={211}>
                  {results.map(([k, v]) => (
                    <React.Fragment key={k}><dt>{k}</dt><dd>{v}</dd></React.Fragment>
                  ))}
                </Pairs>
              </Box>
              <Box $h={145} $top={5}>
                <Pairs $label={88}>
                  <dt>Errors</dt><dd>None</dd>
                  <dt>Warnings</dt><dd>Excessive carbonate concentration present</dd>
                </Pairs>
              </Box>
              <Box>
                <ModelTable>
                  <tbody>
                    {model.map(([name, value]) => (
                      <tr key={name}>
                        <td>{value && <Diamond light size={24} />}</td>
                        <th scope="row">{value ? name : <ModelGroup>{name}</ModelGroup>}</th>
                        <td>{value}</td>
                      </tr>
                    ))}
                  </tbody>
                </ModelTable>
              </Box>
            </Column>

            <Column>
              <TreeBox>
                <TreeTable>
                  <colgroup>
                    <col style={{ width: 393 }} />
                    <col style={{ width: 160 }} />
                    <col style={{ width: 160 }} />
                    <col style={{ width: 160 }} />
                    <col />
                  </colgroup>
                  <thead>
                    <tr>
                      {["Setting", "Value", "Date/time chan...", "Imported from", ""].map((h) => (
                        <th key={h} scope="col"><HeadCell>{h}</HeadCell></th>
                      ))}
                    </tr>
                  </thead>
                  <tbody>
                    {tree.map((r) => (
                      <tr key={r.name}>
                        <td><TreeCell><TreeGuides guides={r.guides} />{r.name}</TreeCell></td>
                        <ValueCell $missing={r.missing}>{r.value}</ValueCell>
                        <td /><td /><td />
                      </tr>
                    ))}
                  </tbody>
                </TreeTable>
              </TreeBox>

              <GraphBar>
                <ComboBox>
                  <Combo aria-label="Graph"><option>Ionisation of sample Trimethoprim</option></Combo>
                  <ComboArrow><DropArrow /></ComboArrow>
                </ComboBox>
                <CheckLabel><CheckBox type="checkbox" />Use baseline correction</CheckLabel>
              </GraphBar>

              <GraphFrame>
                <Thumbs>
                  {thumbs.map((t) => (
                    <ThumbButton key={t.name} aria-label={t.name}>
                      <svg viewBox="0 0 288 188" preserveAspectRatio="none" aria-hidden="true">{t.art}</svg>
                    </ThumbButton>
                  ))}
                </Thumbs>
                <Chart />
              </GraphFrame>
            </Column>
          </Page>
        </Workspace>

        <StatusBar>
          <StatusText>Ready</StatusText>
          <Pane $w={136}>X: 1.08 Y: 1.502</Pane>
          <Pane $w={126}>U : 3 R : 0</Pane>
          <Pane $w={40} />
          <Pane $w={44}>NUM</Pane>
          <Pane $w={48} />
        </StatusBar>
      </AppWindow>

      <SlideFooter>
        <FooterArt viewBox="0 0 600 175" aria-hidden="true">
          <defs>
            <linearGradient id="dusk" x1="0" y1="0" x2="0.6" y2="1">
              <stop offset="0" stopColor="#b6b6de" />
              <stop offset="0.5" stopColor="#acaad4" />
              <stop offset="1" stopColor="#8f8bc0" />
            </linearGradient>
            <linearGradient id="mist" x1="0" y1="1" x2="1" y2="0">
              <stop offset="0" stopColor="#d6d6ea" />
              <stop offset="0.6" stopColor="#eae9f6" />
              <stop offset="1" stopColor="#f2f2fc" />
            </linearGradient>
          </defs>
          <path d="M357 0H441L540 175H38z" fill="url(#mist)" />
          <path d="M0 0H357L273 46 198 82 38 175H0z" fill="url(#dusk)" />
          <path d="M159 0H245L340 175H250z" fill="#c0c0c4" />
        </FooterArt>
        <PageNumber>21/ 70</PageNumber>
        <Copyright>© 2008</Copyright>
      </SlideFooter>
    </Slide>
  );
}
